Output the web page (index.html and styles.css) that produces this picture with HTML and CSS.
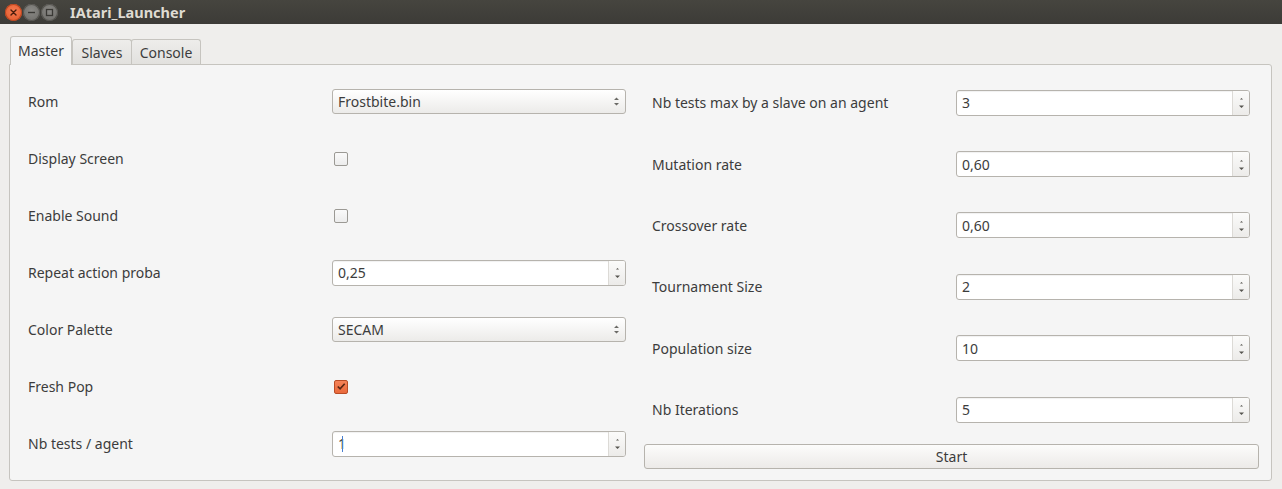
FILE: index.html
```html
<!DOCTYPE html>
<html>
<head>
<meta charset="utf-8">
<link rel="stylesheet" href="styles.css">
</head>
<body>
<div class="window">
  <div class="titlebar">
    <div class="wbtns">
      <span class="wbtn close"><svg width="17" height="17" viewBox="0 0 17 17"><path d="M6 6L11 11M11 6L6 11" stroke="#4a1c0c" stroke-width="1.4" stroke-linecap="round"/></svg></span>
      <span class="wbtn"><svg width="17" height="17" viewBox="0 0 17 17"><path d="M5 8.5H12" stroke="#3a3935" stroke-width="1.4"/></svg></span>
      <span class="wbtn"><svg width="17" height="17" viewBox="0 0 17 17"><rect x="5.5" y="5.5" width="6" height="6" fill="none" stroke="#3a3935" stroke-width="1.3"/></svg></span>
    </div>
    <div class="title">IAtari_Launcher</div>
  </div>
  <div class="content">
    <div class="tabs">
      <div class="tab active">Master</div>
      <div class="tab">Slaves</div>
      <div class="tab">Console</div>
    </div>
    <div class="panel">
      <div class="col left">
        <div class="row"><span class="label">Rom</span><div class="combo"><span>Frostbite.bin</span><span class="carets"><svg width="7" height="11" viewBox="0 0 7 11"><path d="M1 4L3.5 1.5L6 4Z M1 7L3.5 9.5L6 7Z" fill="#6b6a66"/></svg></span></div></div>
        <div class="row"><span class="label">Display Screen</span><span class="check"></span></div>
        <div class="row"><span class="label">Enable Sound</span><span class="check"></span></div>
        <div class="row"><span class="label">Repeat action proba</span><div class="spin"><span class="val">0,25</span><span class="arrows"><svg width="7" height="5" viewBox="0 0 7 5"><path d="M2 3.5L3.5 2L5 3.5Z" fill="#55544f"/></svg><svg width="7" height="5" viewBox="0 0 7 5"><path d="M1 1.5L3.5 4L6 1.5Z" fill="#55544f"/></svg></span></div></div>
        <div class="row"><span class="label">Color Palette</span><div class="combo"><span>SECAM</span><span class="carets"><svg width="7" height="11" viewBox="0 0 7 11"><path d="M1 4L3.5 1.5L6 4Z M1 7L3.5 9.5L6 7Z" fill="#6b6a66"/></svg></span></div></div>
        <div class="row"><span class="label">Fresh Pop</span><span class="check checked"><svg width="13" height="13" viewBox="0 0 13 13"><path d="M3 6.5L5.5 9L10.5 3.5" fill="none" stroke="#5a2614" stroke-width="1.8"/></svg></span></div>
        <div class="row"><span class="label">Nb tests / agent</span><div class="spin"><span class="val">1<span class="cursor"></span></span><span class="arrows"><svg width="7" height="5" viewBox="0 0 7 5"><path d="M2 3.5L3.5 2L5 3.5Z" fill="#55544f"/></svg><svg width="7" height="5" viewBox="0 0 7 5"><path d="M1 1.5L3.5 4L6 1.5Z" fill="#55544f"/></svg></span></div></div>
      </div>
      <div class="col right">
        <div class="rows">
          <div class="row"><span class="label">Nb tests max by a slave on an agent</span><div class="spin"><span class="val">3</span><span class="arrows"><svg width="7" height="5" viewBox="0 0 7 5"><path d="M2 3.5L3.5 2L5 3.5Z" fill="#55544f"/></svg><svg width="7" height="5" viewBox="0 0 7 5"><path d="M1 1.5L3.5 4L6 1.5Z" fill="#55544f"/></svg></span></div></div>
          <div class="row"><span class="label">Mutation rate</span><div class="spin"><span class="val">0,60</span><span class="arrows"><svg width="7" height="5" viewBox="0 0 7 5"><path d="M2 3.5L3.5 2L5 3.5Z" fill="#55544f"/></svg><svg width="7" height="5" viewBox="0 0 7 5"><path d="M1 1.5L3.5 4L6 1.5Z" fill="#55544f"/></svg></span></div></div>
          <div class="row"><span class="label">Crossover rate</span><div class="spin"><span class="val">0,60</span><span class="arrows"><svg width="7" height="5" viewBox="0 0 7 5"><path d="M2 3.5L3.5 2L5 3.5Z" fill="#55544f"/></svg><svg width="7" height="5" viewBox="0 0 7 5"><path d="M1 1.5L3.5 4L6 1.5Z" fill="#55544f"/></svg></span></div></div>
          <div class="row"><span class="label">Tournament Size</span><div class="spin"><span class="val">2</span><span class="arrows"><svg width="7" height="5" viewBox="0 0 7 5"><path d="M2 3.5L3.5 2L5 3.5Z" fill="#55544f"/></svg><svg width="7" height="5" viewBox="0 0 7 5"><path d="M1 1.5L3.5 4L6 1.5Z" fill="#55544f"/></svg></span></div></div>
          <div class="row"><span class="label">Population size</span><div class="spin"><span class="val">10</span><span class="arrows"><svg width="7" height="5" viewBox="0 0 7 5"><path d="M2 3.5L3.5 2L5 3.5Z" fill="#55544f"/></svg><svg width="7" height="5" viewBox="0 0 7 5"><path d="M1 1.5L3.5 4L6 1.5Z" fill="#55544f"/></svg></span></div></div>
          <div class="row"><span class="label">Nb Iterations</span><div class="spin"><span class="val">5</span><span class="arrows"><svg width="7" height="5" viewBox="0 0 7 5"><path d="M2 3.5L3.5 2L5 3.5Z" fill="#55544f"/></svg><svg width="7" height="5" viewBox="0 0 7 5"><path d="M1 1.5L3.5 4L6 1.5Z" fill="#55544f"/></svg></span></div></div>
        </div>
        <button class="start">Start</button>
      </div>
    </div>
  </div>
</div>
</body>
</html>
```

FILE: styles.css
```css
* { box-sizing: border-box; }
html, body { margin: 0; padding: 0; }
body {
  width: 1282px;
  height: 489px;
  background: #efeeec;
  font-family: "Noto Sans", "Open Sans", sans-serif;
  font-size: 14px;
  color: #3c3c3c;
  overflow: hidden;
}
.window { width: 1282px; height: 489px; display: flex; flex-direction: column; }
.titlebar {
  height: 24px;
  background: linear-gradient(#46453f, #3c3b37);
  display: flex;
  align-items: center;
  padding-left: 5px;
}
.wbtns { display: flex; gap: 1px; }
.wbtn {
  width: 17px; height: 17px;
  border-radius: 50%;
  background: radial-gradient(circle at 50% 40%, #8a8985, #6a6965);
  display: flex; align-items: center; justify-content: center;
  box-shadow: inset 0 0 0 1px #55544f;
}
.wbtn.close {
  background: radial-gradient(circle at 50% 40%, #f47a4f, #e0562a);
  box-shadow: inset 0 0 0 1px #b9461f;
}
.title {
  margin-left: 12px;
  font-weight: bold;
  font-size: 14.5px;
  color: #dfdbd2;
}
.content { padding: 12px 10px 0 9px; }
.tabs { display: flex; align-items: flex-end; padding-left: 1px; height: 28px; }
.tab {
  height: 25px;
  border: 1px solid #c6c4bf;
  border-bottom: none;
  border-radius: 3px 3px 0 0;
  background: linear-gradient(#eeedeb, #e2e1de);
  display: flex; align-items: center; justify-content: center;
  margin-right: -1px;
  font-size: 14px;
}
.tab.active {
  background: #f5f5f5;
  position: relative;
  z-index: 1;
  margin-bottom: -1px;
  height: 29px;
  margin-right: 0;
  width: 62px;
  padding: 0 0 1px;
}
.tab:nth-child(2) { width: 60px; }
.tab:nth-child(3) { width: 70px; }
.panel {
  width: 1263px;
  height: 417px;
  border: 1px solid #c6c4bf;
  border-radius: 0 3px 3px 3px;
  background: #f5f5f5;
  display: grid;
  grid-template-columns: 598px 615px;
  column-gap: 18px;
  padding: 8px 12px 0 18px;
}
.col.left { display: flex; flex-direction: column; }
.col.left .row { height: 57px; }
.row { display: flex; align-items: center; }
.label { width: 304px; flex: none; }
.col.right { display: flex; flex-direction: column; margin-top: -1px; }
.col.right .rows { display: flex; flex-direction: column; padding: 0 9px 0 8px; }
.col.right .row { height: 61.4px; }
.combo {
  width: 294px; height: 25px;
  border: 1px solid #b6b3ad;
  border-radius: 3px;
  background: linear-gradient(#ffffff, #ecebe9);
  display: flex; align-items: center; justify-content: space-between;
  padding: 0 5px 0 5px;
}
.carets { display: flex; align-items: center; }
.spin {
  width: 294px; height: 26px;
  border: 1px solid #b6b3ad;
  border-radius: 3px;
  background: #fff;
  display: flex;
  box-shadow: inset 0 1px 1px rgba(0,0,0,0.06);
}
.spin .val { flex: 1; display: flex; align-items: center; padding-left: 5px; }
.cursor { display: inline-block; width: 1px; height: 16px; background: #4a7fd0; margin-left: -4px; }
.arrows {
  width: 17px;
  border-left: 1px solid #dcdad6;
  background: linear-gradient(#fbfbfa, #ecebe9);
  border-radius: 0 2px 2px 0;
  display: flex; flex-direction: column; align-items: center; justify-content: center;
  gap: 3px;
}
.arrows svg { display: block; }
.check {
  width: 14px; height: 14px;
  margin-left: 2px;
  border: 1px solid #9b9994;
  border-radius: 2px;
  background: linear-gradient(#fafafa, #ececec);
  display: flex; align-items: center; justify-content: center;
}
.check.checked {
  border-color: #b94c26;
  background: linear-gradient(#f58358, #ea6a3c);
}
.check svg { display: block; }
.start {
  margin-top: 4px;
  width: 615px; height: 25px;
  border: 1px solid #b6b3ad;
  border-radius: 3px;
  background: linear-gradient(#fcfcfb, #eceae8);
  font-family: inherit;
  font-size: 14px;
  color: #3c3c3c;
  padding: 0;
}
```
